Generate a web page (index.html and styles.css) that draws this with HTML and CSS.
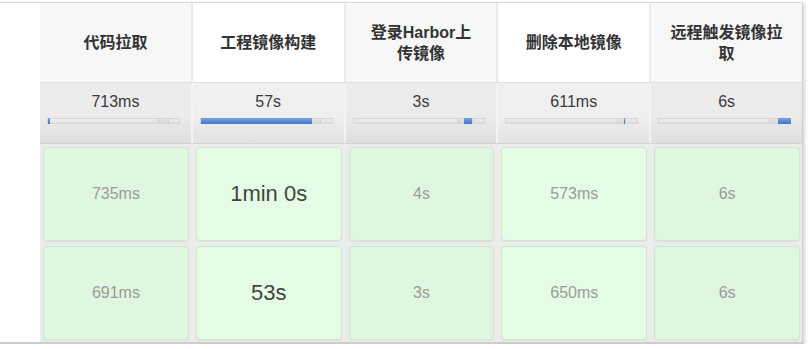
FILE: index.html
```html
<!DOCTYPE html>
<html lang="zh-CN">
<head>
<meta charset="utf-8">
<title>Stage View</title>
<link rel="stylesheet" href="styles.css">
</head>
<body>
<div class="frame">
  <div class="row head">
    <div class="hcell odd">代码拉取</div>
    <div class="hcell even">工程镜像构建</div>
    <div class="hcell odd">登录Harbor上<br>传镜像</div>
    <div class="hcell even">删除本地镜像</div>
    <div class="hcell odd">远程触发镜像拉<br>取</div>
  </div>
  <div class="row avg">
    <div class="acell odd">
      <div class="atime">713ms</div>
      <div class="bar"><span class="range" style="left:110px;width:11px"></span><span class="fill" style="left:0;width:2px"></span></div>
    </div>
    <div class="acell even">
      <div class="atime">57s</div>
      <div class="bar"><span class="range" style="left:110px;width:10px"></span><span class="fill" style="left:0;width:111px"></span></div>
    </div>
    <div class="acell odd">
      <div class="atime">3s</div>
      <div class="bar"><span class="range" style="left:104px;width:16px"></span><span class="fill" style="left:110px;width:8px"></span></div>
    </div>
    <div class="acell even">
      <div class="atime">611ms</div>
      <div class="bar"><span class="range" style="left:111px;width:9px"></span><span class="fill" style="left:118px;width:1px"></span></div>
    </div>
    <div class="acell odd">
      <div class="atime">6s</div>
      <div class="bar"><span class="range" style="left:110px;width:10px"></span><span class="fill" style="left:119px;width:13px"></span></div>
    </div>
  </div>
  <div class="row body">
    <div class="bcell odd"><div class="box">735ms</div></div>
    <div class="bcell even"><div class="box big">1min 0s</div></div>
    <div class="bcell odd"><div class="box">4s</div></div>
    <div class="bcell even"><div class="box">573ms</div></div>
    <div class="bcell odd"><div class="box">6s</div></div>
  </div>
  <div class="row body">
    <div class="bcell odd"><div class="box">691ms</div></div>
    <div class="bcell even"><div class="box big">53s</div></div>
    <div class="bcell odd"><div class="box">3s</div></div>
    <div class="bcell even"><div class="box">650ms</div></div>
    <div class="bcell odd"><div class="box">6s</div></div>
  </div>
</div>
</body>
</html>
```

FILE: styles.css
```css
* { box-sizing: border-box; }

body {
  margin: 0;
  background: #fff;
  font-family: "Liberation Sans", "Noto Sans CJK SC", sans-serif;
}

.frame {
  width: 803px;
  margin-top: 2px;
  padding-left: 40px;
  border-top: 1px solid #d9d9d9;
  border-right: 1px solid #cfcfcf;
  border-bottom: 2px solid #cdcdcd;
  box-shadow: 2px 2px 3px rgba(0, 0, 0, 0.15);
}

.row {
  display: grid;
  grid-template-columns: repeat(5, 1fr);
  column-gap: 2px;
}

.head {
  height: 80px;
  background: #ebebeb;
  border-bottom: 1px solid #e0e0e0;
}

.hcell {
  display: flex;
  align-items: center;
  justify-content: center;
  text-align: center;
  font-family: "Liberation Sans", "Noto Sans CJK SC", sans-serif;
  font-weight: bold;
  font-size: 16px;
  line-height: 21px;
  color: #333;
}

.hcell.odd { background: #f7f7f7; }
.hcell.even { background: #ffffff; }

.avg {
  height: 61px;
  background: #f3f3f3;
  border-bottom: 1px solid #d4d4d4;
}

.acell {
  padding-top: 9px;
  text-align: center;
}

.acell.odd { background: linear-gradient(to bottom, #ececec 0%, #ebebeb 55%, #dedede 100%); }
.acell.even { background: linear-gradient(to bottom, #f0f0f0 0%, #efefef 55%, #e2e2e2 100%); }

.atime {
  font-size: 16px;
  line-height: 20px;
  color: #3a3a3a;
}

.bar {
  position: relative;
  height: 6px;
  margin: 6px 11px 0 7px;
  border: 1px solid #d6d6d6;
  background: linear-gradient(to bottom, #ededed, #e0e0e0);
}

.range {
  position: absolute;
  top: 0;
  bottom: 0;
  background: rgba(0, 0, 0, 0.035);
  border-left: 1px solid #d0d0d0;
  border-right: 1px solid #d0d0d0;
}

.fill {
  position: absolute;
  top: -1px;
  bottom: -1px;
  background: linear-gradient(to bottom, #76a2e4, #4474c8);
}

.body {
  height: 99px;
  padding: 3px 0 2px;
  background: #ececec;
}

.bcell {
  padding: 0 2px 0 3px;
}

.box {
  height: 100%;
  display: flex;
  align-items: center;
  justify-content: center;
  border: 1px solid #d2e4d2;
  border-radius: 4px;
  box-shadow: 0 1px 1px rgba(0, 0, 0, 0.05);
  font-size: 16px;
  color: #9b9b9b;
}

.bcell.odd .box { background: #dff7df; }
.bcell.even .box { background: #e5fde5; }

.box.big {
  font-size: 22px;
  color: #444;
}
```
